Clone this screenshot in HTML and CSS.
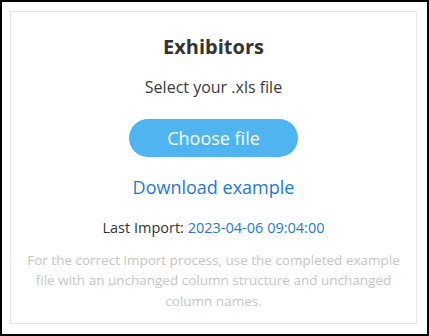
FILE: index.html
```html
<!DOCTYPE html>
<html>
<head>
<meta charset="utf-8">
<link rel="stylesheet" href="styles.css">
</head>
<body>
<div class="frame">
  <div class="card">
    <h1 class="title">Exhibitors</h1>
    <p class="select">Select your .xls file</p>
    <button class="choose">Choose file</button>
    <a class="download" href="#">Download example</a>
    <p class="last">Last Import: <span class="date">2023-04-06 09:04:00</span></p>
    <p class="note">For the correct import process, use the completed example file with an unchanged column structure and unchanged column names.</p>
  </div>
</div>
</body>
</html>
```
FILE: styles.css
```css
html, body {
  margin: 0;
  padding: 0;
  background: #fff;
}
body {
  font-family: "Open Sans", "Noto Sans", sans-serif;
}
.frame {
  box-sizing: border-box;
  width: 429px;
  height: 336px;
  border: 2px solid #000;
  padding: 9px 10px 10px 8px;
}
.card {
  box-sizing: border-box;
  height: 100%;
  border: 1px solid #e6e6e6;
  display: flex;
  flex-direction: column;
  align-items: center;
  padding: 21px 16px 0;
  text-align: center;
}
.title {
  margin: 0;
  font-size: 20px;
  font-weight: 700;
  color: #333;
}
.select {
  margin: 16px 0 0;
  font-size: 16px;
  color: #3a3a3a;
}
.choose {
  margin-top: 21px;
  width: 169px;
  height: 38px;
  border: none;
  border-radius: 19px;
  background: #4fb4ef;
  color: #fff;
  font-family: inherit;
  font-size: 18px;
  padding: 0;
}
.download {
  margin-top: 18px;
  font-size: 18px;
  color: #1f78d8;
  text-decoration: none;
}
.last {
  margin: 19px 0 0;
  font-size: 14.5px;
  color: #333;
}
.date {
  color: #1f78d8;
}
.note {
  margin: 13px 0 0;
  font-size: 13.5px;
  line-height: 20.3px;
  color: #c6c6c6;
}
```
